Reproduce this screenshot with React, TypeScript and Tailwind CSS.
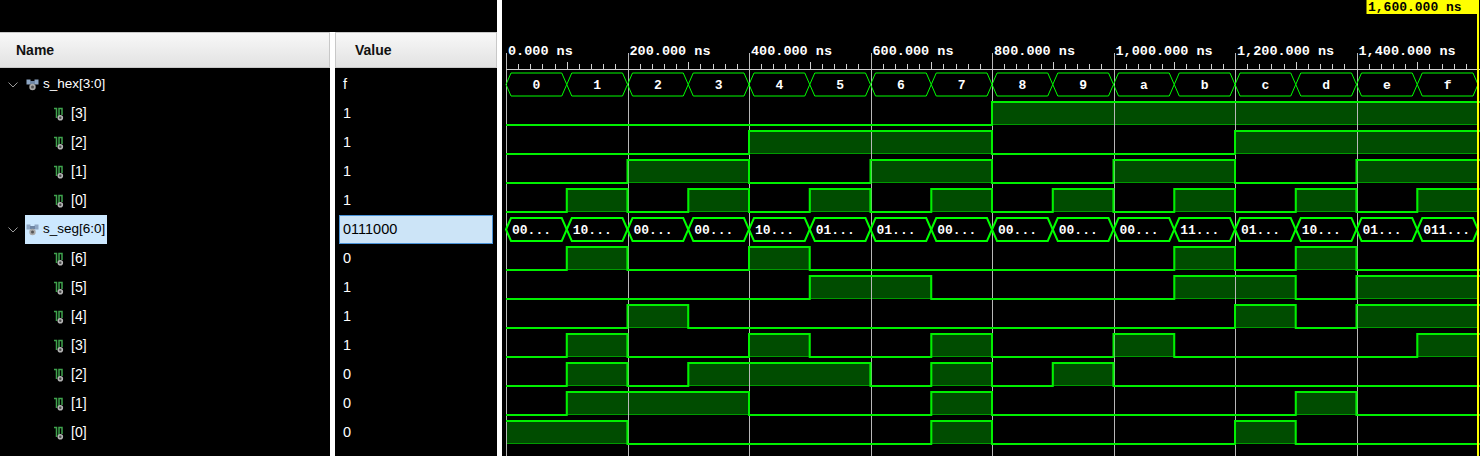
import React from "react";

const U = 60.75;
const X0 = 4;
const W = 978;
const ROW = 29;
const TOP = 70;

const xs = (t: number) => X0 + t * U;

const SEG = [
  "0000001", "1001111", "0010010", "0000110",
  "1001100", "0100100", "0100000", "0001111",
  "0000000", "0000100", "0001000", "1100000",
  "0110001", "1000010", "0110000", "0111000",
];

interface Row {
  name: string;
  value: string;
  bus?: boolean;
  selected?: boolean;
  bits?: number[];
  labels?: string[];
}

const hexBit = (b: number) => Array.from({ length: 16 }, (_, k) => (k >> b) & 1);
const segBit = (b: number) => SEG.map((s) => Number(s[6 - b]));

const rows: Row[] = [
  { name: "s_hex[3:0]", value: "f", bus: true, labels: "0123456789abcdef".split("") },
  ...[3, 2, 1, 0].map((b) => ({ name: `[${b}]`, value: "1", bits: hexBit(b) })),
  {
    name: "s_seg[6:0]",
    value: "0111000",
    bus: true,
    selected: true,
    labels: SEG.map((s, i) => (i === 15 ? "011..." : s.slice(0, 2) + "...")),
  },
  ...[6, 5, 4, 3, 2, 1, 0].map((b) => ({
    name: `[${b}]`,
    value: String(SEG[15][6 - b]),
    bits: segBit(b),
  })),
];

function BusIcon() {
  return (
    <svg width="13" height="12" viewBox="0 0 13 12">
      <rect x="0.5" y="0.5" width="4" height="5" fill="#8ea6c4" />
      <rect x="8.5" y="0.5" width="4" height="5" fill="#8ea6c4" />
      <rect x="4" y="2" width="5" height="3" fill="#6f86a4" />
      <circle cx="6.5" cy="8" r="3.2" fill="#a8a8a8" />
      <circle cx="6.5" cy="8" r="1.5" fill="#555" />
    </svg>
  );
}

function BitIcon() {
  return (
    <svg width="10" height="14" viewBox="0 0 10 14">
      <path d="M0 1.5 H2.5 V11" stroke="#3fa34d" strokeWidth="1.5" fill="none" />
      <path d="M5 10 V1.5 H8 V8" stroke="#3fa34d" strokeWidth="1.5" fill="none" />
      <circle cx="6.3" cy="10.8" r="2.8" fill="#b4b4b4" />
      <circle cx="6.3" cy="10.8" r="1.2" fill="#4a4a4a" />
    </svg>
  );
}

function Chevron() {
  return (
    <svg width="10" height="6" viewBox="0 0 10 6">
      <path d="M0.5 0.5 L5 5 L9.5 0.5" stroke="#9a9a9a" strokeWidth="1" fill="none" />
    </svg>
  );
}

function Bus({ y0, labels, thick }: { y0: number; labels: string[]; thick?: boolean }) {
  const top = y0 + 3;
  const bot = y0 + 26;
  const mid = y0 + 14.5;
  const d = 5;
  return (
    <g>
      {labels.map((lab, k) => {
        const a = xs(k);
        const b = xs(k + 1);
        const pts = `${a},${mid} ${a + d},${top} ${b - d},${top} ${b},${mid} ${b - d},${bot} ${a + d},${bot}`;
        return (
          <g key={k}>
            <polygon points={pts} fill="none" stroke="#00ff00" strokeWidth={thick ? 2 : 1} />
            {thick ? (
              <text x={a + 6} y={mid + 4.5} fill="#fff" fontSize="13" fontWeight="bold" fontFamily="'Liberation Mono', monospace">
                {lab}
              </text>
            ) : (
              <text x={(a + b) / 2} y={mid + 4.5} textAnchor="middle" fill="#fff" fontSize="13" fontWeight="bold" fontFamily="'Liberation Mono', monospace">
                {lab}
              </text>
            )}
          </g>
        );
      })}
    </g>
  );
}

function Logic({ y0, bits }: { y0: number; bits: number[] }) {
  const hi = y0 + 3;
  const lo = y0 + 26;
  const yv = (v: number) => (v ? hi : lo);
  let path = `M${xs(0)} ${yv(bits[0])}`;
  for (let k = 1; k < bits.length; k++) {
    if (bits[k] !== bits[k - 1]) path += ` L${xs(k)} ${yv(bits[k - 1])} L${xs(k)} ${yv(bits[k])}`;
  }
  path += ` L${W} ${yv(bits[bits.length - 1])}`;

  const runs: [number, number][] = [];
  bits.forEach((v, k) => {
    if (!v) return;
    const last = runs[runs.length - 1];
    if (last && last[1] === k) last[1] = k + 1;
    else runs.push([k, k + 1]);
  });

  return { fills: runs.map(([a, b], i) => (
    <rect key={i} x={xs(a) + 0.5} y={hi + 0.5} width={xs(b) - xs(a) - 1} height={lo - hi - 1} fill="#004c00" stroke="#009a00" strokeWidth="1" />
  )), line: <path d={path} stroke="#00f000" strokeWidth="2" fill="none" /> };
}

function Waves() {
  const grid = [0, 2, 4, 6, 8, 10, 12, 14];
  const labels = ["0.000 ns", "200.000 ns", "400.000 ns", "600.000 ns", "800.000 ns", "1,000.000 ns", "1,200.000 ns", "1,400.000 ns"];
  const ticks: number[] = [];
  for (let t = 0; t < 16; t += 0.2) {
    const r = Math.round(t * 10) / 10;
    if (r % 2 !== 0) ticks.push(r);
  }
  const logic = rows.map((r, i) => (r.bits ? Logic({ y0: TOP + ROW * i, bits: r.bits }) : null));

  return (
    <svg width={W} height="456" className="block">
      {logic.map((l, i) => <g key={i}>{l?.fills}</g>)}
      {grid.map((t) => (
        <line key={t} x1={Math.round(xs(t)) + 0.5} x2={Math.round(xs(t)) + 0.5} y1="53" y2="456" stroke="#b8b8b8" strokeWidth="1" shapeRendering="crispEdges" />
      ))}
      <line x1={xs(0)} x2={W} y1="69.5" y2="69.5" stroke="#d0d0d0" strokeWidth="1" shapeRendering="crispEdges" />
      {ticks.map((t) => {
        const x = Math.round(xs(t)) + 0.5;
        const major = Math.abs(t - Math.round(t)) < 0.01;
        return <line key={t} x1={x} x2={x} y1={major ? 62 : 64} y2="69" stroke="#d0d0d0" strokeWidth="1" shapeRendering="crispEdges" />;
      })}
      {grid.map((t, i) => (
        <text key={t} x={xs(t) + 2} y="55" fill="#fff" fontSize="13.5" fontWeight="bold" fontFamily="'Liberation Mono', monospace">
          {labels[i]}
        </text>
      ))}
      {logic.map((l, i) => <g key={i}>{l?.line}</g>)}
      {rows.map((r, i) =>
        r.bus && r.labels ? <Bus key={i} y0={TOP + ROW * i} labels={r.labels} thick={r.selected} /> : null
      )}
      <rect x="864.5" y="0" width="112" height="14" fill="#ffff00" />
      <text x="866" y="11" fill="#000" fontSize="13" fontWeight="bold" fontFamily="'Liberation Mono', monospace">
        1,600.000 ns
      </text>
      <rect x="975" y="0" width="2" height="456" fill="#ffff00" />
    </svg>
  );
}

export default function App() {
  return (
    <div className="flex w-[1480px] h-[456px] bg-black overflow-hidden font-['Liberation_Sans',Arial,sans-serif]">
      <div className="w-[330px] flex flex-col">
        <div className="h-[32px]" />
        <div className="h-[36px] flex items-center pl-[16px] bg-gradient-to-b from-[#f8f8f8] to-[#e2e2e2] border-y border-r border-[#c8c8c8] text-[14px] font-bold text-[#111]">
          Name
        </div>
        <div className="pt-[2px]">
          {rows.map((r, i) =>
            r.bus ? (
              <div key={i} className="h-[29px] flex items-center">
                <span className="w-[25px] pl-[8px] flex items-center">
                  <Chevron />
                </span>
                <span
                  className={
                    r.selected
                      ? "h-full flex items-center pl-[1px] pr-[2px] bg-[#cce8ff] text-black"
                      : "h-full flex items-center pl-[1px] pr-[2px] text-white"
                  }
                >
                  <BusIcon />
                  <span className="ml-[4px] text-[13.5px]">{r.name}</span>
                </span>
              </div>
            ) : (
              <div key={i} className="h-[29px] flex items-center pl-[54px] text-white">
                <BitIcon />
                <span className="ml-[7px] text-[14px]">{r.name}</span>
              </div>
            )
          )}
        </div>
      </div>

      <div className="w-[5px] flex flex-col">
        <div className="h-[32px]" />
        <div className="flex-1 bg-white" />
      </div>

      <div className="w-[162px] flex flex-col">
        <div className="h-[32px]" />
        <div className="h-[36px] flex items-center pl-[19px] bg-gradient-to-b from-[#f8f8f8] to-[#e2e2e2] border border-[#c8c8c8] text-[14px] font-bold text-[#111]">
          Value
        </div>
        <div className="pt-[2px]">
          {rows.map((r, i) =>
            r.selected ? (
              <div key={i} className="h-[29px] px-[4px]">
                <div className="h-full flex items-center pl-[3px] bg-[#cce4f7] border border-[#4a93d8] text-black text-[14.5px]">
                  {r.value}
                </div>
              </div>
            ) : (
              <div key={i} className="h-[29px] flex items-center pl-[8px] text-white text-[14.5px]">
                {r.value}
              </div>
            )
          )}
        </div>
      </div>

      <div className="w-[5px] bg-white" />

      <Waves />
    </div>
  );
}
